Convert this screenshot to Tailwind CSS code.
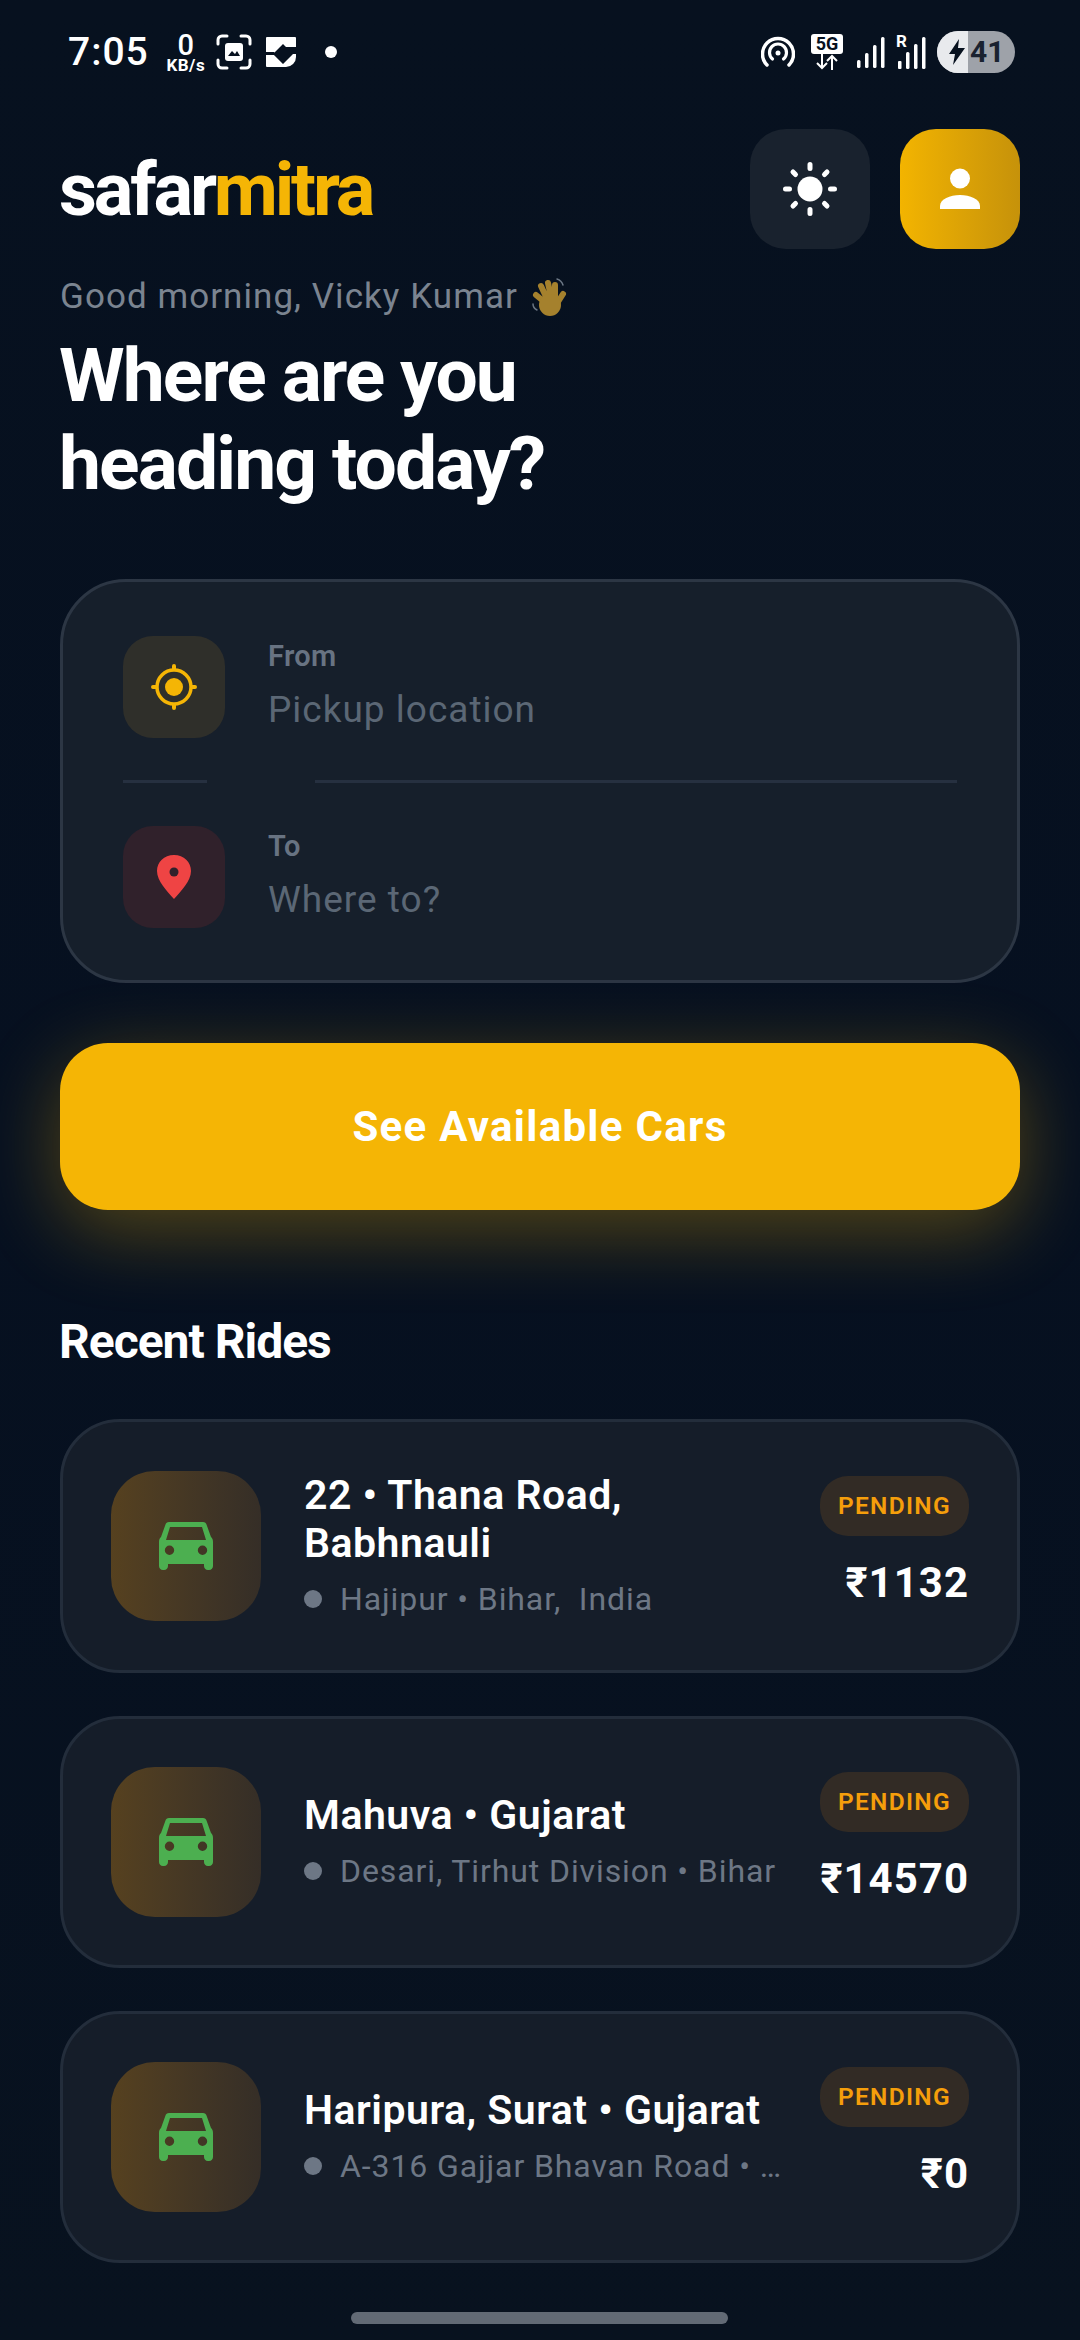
<!DOCTYPE html>
<html>
<head>
<meta charset="utf-8">
<script src="https://cdn.jsdelivr.net/npm/@tailwindcss/browser@4"></script>
</head>
<body class="bg-[#07111f] font-['Roboto',sans-serif] text-white">
<div class="relative w-[1080px] h-[2340px] overflow-hidden bg-gradient-to-b from-[#07111f] via-[#061020] to-[#08121f] px-[60px]">

    <!-- Status bar -->
    <div class="flex items-center justify-between h-[104px] pl-[8px] pr-[5px]">
        <div class="flex items-center">
            <span class="text-[39px] font-medium tracking-[1px] leading-none">7:05</span>
            <div class="flex flex-col items-center ml-[17px] w-[40px] mt-[1px]">
                <span class="text-[29px] leading-[24px] font-medium">0</span>
                <span class="text-[17px] leading-[14px] font-bold tracking-[0.500px] mt-[1px]">KB/s</span>
            </div>
            <svg class="ml-[10px] w-[36px] h-[36px]" viewBox="0 0 36 36" fill="none">
                <path d="M2 10V6a4 4 0 014-4h5M25 2h5a4 4 0 014 4v4M34 26v4a4 4 0 01-4 4h-5M11 34H6a4 4 0 01-4-4v-4" stroke="#fff" stroke-width="3" stroke-linecap="round"/>
                <path d="M9 12a3 3 0 013-3h12a3 3 0 013 3v12a3 3 0 01-3 3H12a3 3 0 01-3-3z" fill="#fff"/>
                <path d="M12 22l4-5 3 3 2-3 3 5z" fill="#07111f"/>
            </svg>
            <svg class="ml-[14px] w-[30px] h-[30px]" viewBox="0 0 30 30">
                <path d="M1 0h28a1 1 0 011 1v19a10 10 0 01-10 10H1a1 1 0 01-1-1V1a1 1 0 011-1z" fill="#fff"/>
                <path d="M17 7l10 10-10 10-10-10zM20 10h10v7h-6zM0 15h8l2 3H0z" fill="#07111f"/>
            </svg>
            <span class="ml-[29px] w-[12px] h-[12px] rounded-full bg-white"></span>
        </div>
        <div class="flex items-center">
            <svg class="w-[34px] h-[32px]" viewBox="0 0 34 32" fill="none" stroke="#fff" stroke-linecap="round">
                <path d="M6 29A15.500 15.500 0 1128 29" stroke-width="3.500"/>
                <path d="M11.500 23a8.500 8.500 0 1111 0" stroke-width="3.200"/>
                <circle cx="17" cy="17" r="2.500" fill="#fff" stroke="none"/>
            </svg>
            <div class="ml-[16px] flex flex-col items-center w-[32px]">
                <span class="w-[32px] h-[20px] rounded-[3px] bg-white text-[#07111f] text-[18px] leading-[20px] font-bold text-center">5G</span>
                <svg class="w-[24px] h-[16px]" viewBox="0 0 24 16" fill="none" stroke="#fff" stroke-width="2">
                    <path d="M7 0v14M2 9l5 5 5-5M17 16V2M12 7l5-5 5 5"/>
                </svg>
            </div>
            <svg class="ml-[14px] w-[28px] h-[32px]" viewBox="0 0 28 32" fill="#fff">
                <rect x="0" y="24" width="3.500" height="8" rx="1.500"/>
                <rect x="8" y="17" width="3.500" height="15" rx="1.500"/>
                <rect x="16" y="9" width="3.500" height="23" rx="1.500"/>
                <rect x="24" y="1" width="3.500" height="31" rx="1.500"/>
            </svg>
            <div class="relative ml-[11px] w-[30px] h-[34px]">
                <span class="absolute left-0 top-[-2px] text-[17px] leading-[16px] font-bold">R</span>
                <svg class="w-[30px] h-[34px]" viewBox="0 0 30 34" fill="#fff">
                    <rect x="2" y="26" width="3.500" height="8" rx="1"/>
                    <rect x="10" y="17" width="3.500" height="17" rx="1.500"/>
                    <rect x="18" y="9" width="3.500" height="25" rx="1.500"/>
                    <rect x="26" y="2" width="3.500" height="32" rx="1.500"/>
                </svg>
            </div>
            <div class="ml-[11px] w-[78px] h-[42px] rounded-full overflow-hidden flex bg-[#9ea2a9] relative">
                <div class="w-[31px] bg-[#e8eaed] flex items-center justify-end pr-[3px]">
                    <svg class="w-[16px] h-[26px]" viewBox="0 0 16 26" fill="#07111f"><path d="M10 0L0 15h6l-2 11L16 9H9z"/></svg>
                </div>
                <span class="pl-[2px] text-[#1a2230] text-[30px] leading-[42px] font-bold">41</span>
            </div>
        </div>
    </div>

    <!-- Header -->
    <div class="flex items-center justify-between mt-[25px]">
        <div class="-ml-[1px] text-[74px] font-bold tracking-[-3.200px] leading-[119px]">safar<span class="text-[#f5b505]">mitra</span></div>
        <div class="flex gap-[30px]">
            <div class="w-[120px] h-[120px] rounded-[36px] bg-[#19222e] flex items-center justify-center">
                <svg class="w-[56px] h-[56px]" viewBox="0 0 56 56" fill="#fff" stroke="#fff" stroke-linecap="round">
                    <circle cx="28" cy="28" r="12.500" stroke="none"/>
                    <path stroke-width="5" d="M28 3.500v4M28 48.500v4M3.500 28h4M48.500 28h4M11 11l2.500 2.500M42.500 42.500L45 45M11 45l2.500-2.500M42.500 13.500L45 11"/>
                </svg>
            </div>
            <div class="w-[120px] h-[120px] rounded-[36px] bg-gradient-to-r from-[#f3b400] to-[#c6920a] flex items-center justify-center">
                <svg class="w-[42px] h-[42px]" viewBox="0 0 42 42" fill="#fff">
                    <circle cx="21" cy="10.500" r="10"/>
                    <path d="M1 41v-3c0-7 10-11 20-11s20 4 20 11v3z"/>
                </svg>
            </div>
        </div>
    </div>

    <!-- Greeting -->
    <div class="flex items-center mt-[28px] h-[40px] text-[35px] text-[#7b8490] tracking-[1.050px]">
        <span>Good morning, Vicky Kumar</span>
        <svg class="ml-[12px] w-[38px] h-[40px]" viewBox="28 6 38 40" fill="none">
            <g stroke="#a5812d" stroke-width="6" stroke-linecap="round">
                <path d="M45 33L34 24M46 30L39 15M50 30L46 12M53 30L53 14M54 34L61 23"/>
            </g>
            <circle cx="48" cy="34" r="11" fill="#a5812d"/>
            <path d="M55 8c3 1 5 3 6 6M31 33c0 3 2 5 4 6" stroke="#6b7684" stroke-width="1.500" stroke-linecap="round"/>
        </svg>
    </div>
    <h1 class="-ml-[1px] mt-[14px] text-[75px] leading-[88px] font-bold tracking-[-1.900px]">Where are you<br>heading today?</h1>

    <!-- Search form -->
    <div class="mt-[72px] h-[404px] rounded-[66px] border-[3px] border-[#2c3644] bg-[#161f2b] px-[60px] pt-[54px]">
        <div class="flex items-center">
            <div class="w-[102px] h-[102px] rounded-[30px] bg-[#2f2f2a] flex items-center justify-center">
                <svg class="w-[46px] h-[46px]" viewBox="0 0 46 46" fill="none" stroke="#f5b505">
                    <circle cx="23" cy="23" r="17" stroke-width="3.500"/>
                    <circle cx="23" cy="23" r="9" fill="#f5b505" stroke="none"/>
                    <path stroke-width="4" stroke-linecap="round" d="M23 2v3M23 41v3M2 23h3M41 23h3"/>
                </svg>
            </div>
            <div class="ml-[43px] -mt-[5px]">
                <div class="text-[29px] leading-[36px] font-semibold text-[#687382] tracking-[0.300px]">From</div>
                <div class="mt-[15px] text-[37px] leading-[42px] text-[#5b6775] tracking-[1px]">Pickup location</div>
            </div>
        </div>
        <div class="flex mt-[42px] h-[3px]">
            <div class="w-[84px] bg-[#263040]"></div>
            <div class="ml-[108px] flex-1 bg-[#263040]"></div>
        </div>
        <div class="flex items-center mt-[43px]">
            <div class="w-[102px] h-[102px] rounded-[30px] bg-[#30212b] flex items-center justify-center">
                <svg class="w-[36px] h-[44px]" viewBox="0 0 36 44">
                    <path d="M18 0C8 0 1 7 1 16c0 10 10 20 17 28 7-8 17-18 17-28C35 7 28 0 18 0z" fill="#ef4444"/>
                    <circle cx="18" cy="17" r="4.500" fill="#30212b"/>
                </svg>
            </div>
            <div class="ml-[43px] -mt-[6px]">
                <div class="text-[29px] leading-[36px] font-semibold text-[#687382] tracking-[0.300px]">To</div>
                <div class="mt-[15px] text-[37px] leading-[42px] text-[#5b6775] tracking-[1px]">Where to?</div>
            </div>
        </div>
    </div>

    <!-- CTA -->
    <div class="mt-[60px] h-[167px] rounded-[48px] bg-[#f5b505] shadow-[0_20px_80px_rgba(245,181,5,0.33)] flex items-center justify-center text-[42px] font-bold tracking-[1.300px]">See Available Cars</div>

    <h2 class="-ml-[1px] mt-[106px] text-[48px] leading-[52px] font-bold tracking-[-1px]">Recent Rides</h2>

    <!-- Rides -->
    <div class="mt-[51px] flex flex-col gap-[43px]">
        <div class="h-[254px] rounded-[60px] border-[3px] border-[#232d3b] bg-[#151d29] pl-[48px] pr-[48px] flex items-center">
            <div class="w-[150px] h-[150px] rounded-[44px] bg-gradient-to-r from-[#56411f] to-[#352e27] shrink-0 flex items-center justify-center">
                <svg class="w-[54px] h-[48px]" viewBox="0 0 54 48" fill="#4caf50">
                    <path fill-rule="evenodd" d="M10 0h34c2 0 3 1 3.500 2.500L52 15c1.500 1 2 3 2 5v24c0 2-1.500 4-4 4h-1c-2.500 0-4-2-4-4v-2H9v2c0 2-1.500 4-4 4H4c-2.500 0-4-2-4-4V20c0-2 .5-4 2-5L6.500 2.500C7 1 8 0 10 0zM11 5L7 18h40L43 5zM10.500 23.500a4.700 4.700 0 100 9.400 4.700 4.700 0 000-9.400zM43.500 23.500a4.700 4.700 0 100 9.400 4.700 4.700 0 000-9.400z"/>
                </svg>
            </div>
            <div class="ml-[43px] flex-1 min-w-0">
                <div class="text-[41px] leading-[48px] font-semibold tracking-[0.500px] w-[420px]">22 • Thana Road, Babhnauli</div>
                <div class="mt-[10px] flex items-center text-[32px] leading-[44px] text-[#6d7785] tracking-[0.900px]">
                    <span class="w-[18px] h-[18px] rounded-full bg-[#6d7785] shrink-0"></span>
                    <span class="ml-[18px] truncate whitespace-pre">Hajipur • Bihar,  India</span>
                </div>
            </div>
            <div class="flex flex-col items-end shrink-0 pb-[8px]">
                <span class="h-[60px] w-[149px] rounded-[28px] bg-[#322b25] text-[#f59e0b] text-[24.500px] font-semibold tracking-[1.300px] leading-[60px] text-center">PENDING</span>
                <span class="mt-[22px] text-[42px] leading-[50px] font-bold tracking-[1px]">₹1132</span>
            </div>
        </div>

        <div class="h-[252px] rounded-[60px] border-[3px] border-[#232d3b] bg-[#151d29] pl-[48px] pr-[48px] flex items-center">
            <div class="w-[150px] h-[150px] rounded-[44px] bg-gradient-to-r from-[#56411f] to-[#352e27] shrink-0 flex items-center justify-center">
                <svg class="w-[54px] h-[48px]" viewBox="0 0 54 48" fill="#4caf50">
                    <path fill-rule="evenodd" d="M10 0h34c2 0 3 1 3.500 2.500L52 15c1.500 1 2 3 2 5v24c0 2-1.500 4-4 4h-1c-2.500 0-4-2-4-4v-2H9v2c0 2-1.500 4-4 4H4c-2.500 0-4-2-4-4V20c0-2 .5-4 2-5L6.500 2.500C7 1 8 0 10 0zM11 5L7 18h40L43 5zM10.500 23.500a4.700 4.700 0 100 9.400 4.700 4.700 0 000-9.400zM43.500 23.500a4.700 4.700 0 100 9.400 4.700 4.700 0 000-9.400z"/>
                </svg>
            </div>
            <div class="ml-[43px] flex-1 min-w-0">
                <div class="text-[41px] leading-[48px] font-semibold tracking-[0.500px]">Mahuva • Gujarat</div>
                <div class="mt-[10px] flex items-center text-[32px] leading-[44px] text-[#6d7785] tracking-[0.900px]">
                    <span class="w-[18px] h-[18px] rounded-full bg-[#6d7785] shrink-0"></span>
                    <span class="ml-[18px] whitespace-nowrap">Desari, Tirhut Division • Bihar</span>
                </div>
            </div>
            <div class="flex flex-col items-end shrink-0 pb-[8px]">
                <span class="h-[60px] w-[149px] rounded-[28px] bg-[#322b25] text-[#f59e0b] text-[24.500px] font-semibold tracking-[1.300px] leading-[60px] text-center">PENDING</span>
                <span class="mt-[22px] text-[42px] leading-[50px] font-bold tracking-[1px]">₹14570</span>
            </div>
        </div>

        <div class="h-[252px] rounded-[60px] border-[3px] border-[#232d3b] bg-[#151d29] pl-[48px] pr-[48px] flex items-center">
            <div class="w-[150px] h-[150px] rounded-[44px] bg-gradient-to-r from-[#56411f] to-[#352e27] shrink-0 flex items-center justify-center">
                <svg class="w-[54px] h-[48px]" viewBox="0 0 54 48" fill="#4caf50">
                    <path fill-rule="evenodd" d="M10 0h34c2 0 3 1 3.500 2.500L52 15c1.500 1 2 3 2 5v24c0 2-1.500 4-4 4h-1c-2.500 0-4-2-4-4v-2H9v2c0 2-1.500 4-4 4H4c-2.500 0-4-2-4-4V20c0-2 .5-4 2-5L6.500 2.500C7 1 8 0 10 0zM11 5L7 18h40L43 5zM10.500 23.500a4.700 4.700 0 100 9.400 4.700 4.700 0 000-9.400zM43.500 23.500a4.700 4.700 0 100 9.400 4.700 4.700 0 000-9.400z"/>
                </svg>
            </div>
            <div class="ml-[43px] flex-1 min-w-0">
                <div class="text-[41px] leading-[48px] font-semibold tracking-[0.500px] whitespace-nowrap">Haripura, Surat • Gujarat</div>
                <div class="mt-[10px] flex items-center text-[32px] leading-[44px] text-[#6d7785] tracking-[0.900px]">
                    <span class="w-[18px] h-[18px] rounded-full bg-[#6d7785] shrink-0"></span>
                    <span class="ml-[18px] whitespace-nowrap">A-316 Gajjar Bhavan Road • …</span>
                </div>
            </div>
            <div class="flex flex-col items-end shrink-0 pb-[8px]">
                <span class="h-[60px] w-[149px] rounded-[28px] bg-[#322b25] text-[#f59e0b] text-[24.500px] font-semibold tracking-[1.300px] leading-[60px] text-center">PENDING</span>
                <span class="mt-[22px] text-[42px] leading-[50px] font-bold tracking-[1px]">₹0</span>
            </div>
        </div>
    </div>

    <!-- Home indicator -->
    <div class="absolute left-[351px] bottom-[16px] w-[377px] h-[12px] rounded-full bg-[#626a75]"></div>
</div>
</body>
</html>
